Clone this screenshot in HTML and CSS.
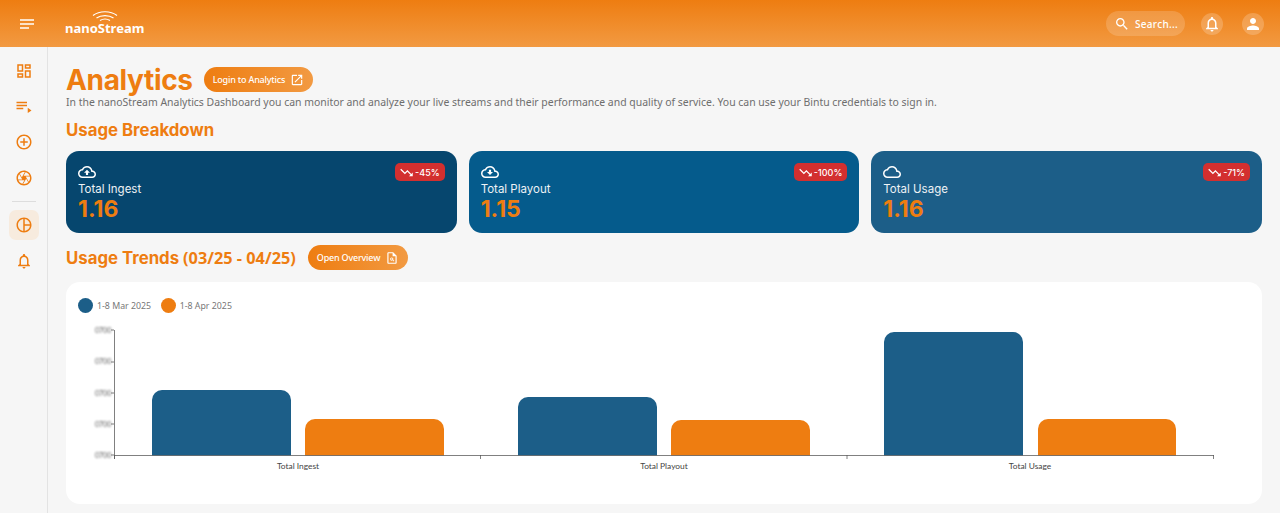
FILE: index.html
```html
<!DOCTYPE html>
<html>
<head>
  <title>nanoStream Analytics</title>
  <meta name="viewport" content="width=device-width, initial-scale=1">
  <link rel="stylesheet" href="styles.css">
</head>
<body>
  <header class="topbar">
    <div class="topbar-left">
      <svg class="menu-icon" viewBox="0 0 14 10"><path d="M0 1h14M0 5h14M0 9h9"/></svg>
      <div class="logo">
        <svg class="logo-waves" viewBox="0 0 26 12"><path d="M1 5.5C7.500.5 18.500.5 25 5.500M4.500 8C9 4.800 17 4.800 21.500 8M8 10.500C11 8.700 15 8.700 18 10.500"/></svg>
        <span class="logo-text">nanoStream</span>
      </div>
    </div>
    <div class="topbar-right">
      <div class="search">
        <svg class="icon-16" viewBox="0 0 24 24"><path d="M15.5 14h-.79l-.28-.27C15.41 12.59 16 11.11 16 9.5 16 5.91 13.09 3 9.5 3S3 5.91 3 9.5 5.91 16 9.5 16c1.610 0 3.090-.59 4.230-1.570l.27.28v.79l5 4.990L20.490 19l-4.990-5zm-6 0C7.010 14 5 11.990 5 9.500S7.010 5 9.500 5 14 7.010 14 9.500 11.990 14 9.500 14z"/></svg>
        <span>Search...</span>
      </div>
      <div class="round-btn">
        <svg class="icon-18" viewBox="0 0 24 24"><path d="M12 22c1.100 0 2-.9 2-2h-4c0 1.100.9 2 2 2zm6-6v-5c0-3.070-1.630-5.640-4.500-6.320V4c0-.83-.67-1.500-1.500-1.500s-1.500.67-1.500 1.500v.68C7.640 5.360 6 7.920 6 11v5l-2 2v1h16v-1l-2-2zm-2 1H8v-6c0-2.480 1.510-4.500 4-4.500s4 2.020 4 4.500v6z"/></svg>
      </div>
      <div class="round-btn user-btn">
        <svg class="icon-18" viewBox="0 0 24 24"><path d="M12 12c2.210 0 4-1.790 4-4s-1.790-4-4-4-4 1.790-4 4 1.790 4 4 4zm0 2c-2.670 0-8 1.340-8 4v2h16v-2c0-2.660-5.330-4-8-4z"/></svg>
      </div>
    </div>
  </header>

  <div class="page">
    <nav class="sidebar">
      <div class="nav-item">
        <svg viewBox="0 0 24 24"><path d="M19 5v2h-4V5h4M9 5v6H5V5h4m10 8v6h-4v-6h4M9 17v2H5v-2h4M21 3h-8v6h8V3zM11 3H3v10h8V3zm10 8h-8v10h8V11zm-10 4H3v6h8v-6z"/></svg>
      </div>
      <div class="nav-item">
        <svg viewBox="0 0 24 24"><path d="M2 5h14v2H2zm0 4h14v2H2zm0 4h9v2H2zM17 13v7l5-3.500z"/></svg>
      </div>
      <div class="nav-item">
        <svg viewBox="0 0 24 24"><path d="M13 7h-2v4H7v2h4v4h2v-4h4v-2h-4V7zm-1-5C6.480 2 2 6.480 2 12s4.480 10 10 10 10-4.480 10-10S17.520 2 12 2zm0 18c-4.410 0-8-3.590-8-8s3.590-8 8-8 8 3.590 8 8-3.590 8-8 8z"/></svg>
      </div>
      <div class="nav-item">
        <svg viewBox="0 0 24 24"><path d="M14.250 2.260l-.08-.04-.01.02C13.460 2.090 12.740 2 12 2 6.480 2 2 6.480 2 12s4.480 10 10 10 10-4.480 10-10c0-4.750-3.310-8.720-7.750-9.740zM19.410 9h-7.990l2.710-4.700c2.400.66 4.350 2.420 5.280 4.700zM13.100 4.080L10.270 9l-1.150 2L6.400 6.300C7.840 4.880 9.820 4 12 4c.37 0 .74.03 1.100.08zM5.700 7.090L8.540 12l1.150 2H4.260C4.100 13.360 4 12.690 4 12c0-1.850.64-3.550 1.700-4.910zM4.590 15h7.980l-2.710 4.700c-2.400-.67-4.340-2.420-5.270-4.700zm6.310 4.910L14.890 13l2.720 4.700C16.160 19.120 14.180 20 12 20c-.38 0-.74-.04-1.100-.09zm7.400-3l-4-6.910h5.430c.17.64.27 1.310.27 2 0 1.850-.64 3.550-1.700 4.910z"/></svg>
      </div>
      <div class="nav-divider"></div>
      <div class="nav-item active">
        <svg viewBox="0 0 24 24"><path d="M12 2C6.490 2 2 6.490 2 12s4.490 10 10 10 10-4.490 10-10S17.510 2 12 2zm7.930 9H13V4.070c3.610.45 6.480 3.320 6.930 6.930zM4 12c0-4.070 3.060-7.440 7-7.930v15.860c-3.940-.49-7-3.860-7-7.930zm9 7.930V13h6.930c-.45 3.610-3.320 6.480-6.930 6.930z"/></svg>
      </div>
      <div class="nav-item">
        <svg viewBox="0 0 24 24"><path d="M12 22c1.100 0 2-.9 2-2h-4c0 1.100.9 2 2 2zm6-6v-5c0-3.070-1.630-5.640-4.500-6.320V4c0-.83-.67-1.500-1.500-1.500s-1.500.67-1.500 1.500v.68C7.640 5.360 6 7.920 6 11v5l-2 2v1h16v-1l-2-2zm-2 1H8v-6c0-2.480 1.510-4.500 4-4.500s4 2.020 4 4.500v6z"/></svg>
      </div>
    </nav>

    <main class="content">
      <div class="title-row">
        <h1>Analytics</h1>
        <a class="pill-btn">Login to Analytics
          <svg class="icon-14" viewBox="0 0 24 24"><path d="M19 19H5V5h7V3H5c-1.110 0-2 .9-2 2v14c0 1.100.89 2 2 2h14c1.100 0 2-.9 2-2v-7h-2v7zM14 3v2h3.590l-9.830 9.830 1.410 1.410L19 6.410V10h2V3h-7z"/></svg>
        </a>
      </div>
      <p class="intro">In the nanoStream Analytics Dashboard you can monitor and analyze your live streams and their performance and quality of service. You can use your Bintu credentials to sign in.</p>

      <h2 class="breakdown-title">Usage Breakdown</h2>
      <section class="stat-cards">
        <div class="stat-card ingest">
          <span class="badge">
            <svg viewBox="0 0 24 24"><path d="M16 18l2.290-2.290-4.880-4.880-4 4L2 7.410 3.410 6l6 6 4-4 6.300 6.290L22 12v6z"/></svg>-45%
          </span>
          <svg class="cloud" viewBox="0 0 24 24"><path d="M19.350 10.040C18.670 6.590 15.640 4 12 4 9.110 4 6.600 5.640 5.350 8.040 2.340 8.360 0 10.910 0 14c0 3.310 2.690 6 6 6h13c2.760 0 5-2.240 5-5 0-2.640-2.050-4.780-4.650-4.960zM19 18H6c-2.210 0-4-1.790-4-4 0-2.050 1.530-3.760 3.560-3.970l1.070-.11.5-.95C8.080 7.140 9.940 6 12 6c2.620 0 4.880 1.860 5.390 4.430l.3 1.500 1.530.11c1.560.1 2.780 1.410 2.780 2.960 0 1.650-1.350 3-3 3zM8 13h2.550v3h2.900v-3H16l-4-4z"/></svg>
          <div class="stat-label">Total Ingest</div>
          <div class="stat-value">1.16</div>
        </div>
        <div class="stat-card playout">
          <span class="badge">
            <svg viewBox="0 0 24 24"><path d="M16 18l2.290-2.290-4.880-4.880-4 4L2 7.410 3.410 6l6 6 4-4 6.300 6.290L22 12v6z"/></svg>-100%
          </span>
          <svg class="cloud" viewBox="0 0 24 24"><path d="M19.350 10.040C18.670 6.590 15.640 4 12 4 9.110 4 6.600 5.640 5.350 8.040 2.340 8.360 0 10.910 0 14c0 3.310 2.690 6 6 6h13c2.760 0 5-2.240 5-5 0-2.640-2.050-4.780-4.650-4.960zM19 18H6c-2.210 0-4-1.790-4-4 0-2.050 1.530-3.760 3.560-3.970l1.070-.11.5-.95C8.080 7.140 9.940 6 12 6c2.620 0 4.880 1.860 5.390 4.430l.3 1.500 1.530.11c1.560.1 2.780 1.410 2.780 2.960 0 1.650-1.350 3-3 3zM13.450 9h-2.900v3H8l4 4 4-4h-2.550z"/></svg>
          <div class="stat-label">Total Playout</div>
          <div class="stat-value">1.15</div>
        </div>
        <div class="stat-card usage">
          <span class="badge">
            <svg viewBox="0 0 24 24"><path d="M16 18l2.290-2.290-4.880-4.880-4 4L2 7.410 3.410 6l6 6 4-4 6.300 6.290L22 12v6z"/></svg>-71%
          </span>
          <svg class="cloud" viewBox="0 0 24 24"><path d="M19.350 10.040C18.670 6.590 15.640 4 12 4 9.110 4 6.600 5.640 5.350 8.040 2.340 8.360 0 10.910 0 14c0 3.310 2.690 6 6 6h13c2.760 0 5-2.240 5-5 0-2.640-2.050-4.780-4.650-4.960zM19 18H6c-2.210 0-4-1.790-4-4 0-2.050 1.530-3.760 3.560-3.970l1.070-.11.5-.95C8.080 7.140 9.940 6 12 6c2.620 0 4.880 1.860 5.390 4.430l.3 1.500 1.530.11c1.560.1 2.780 1.410 2.780 2.960 0 1.650-1.350 3-3 3z"/></svg>
          <div class="stat-label">Total Usage</div>
          <div class="stat-value">1.16</div>
        </div>
      </section>

      <div class="trends-row">
        <h2>Usage Trends <span class="dates">(03/25 - 04/25)</span></h2>
        <a class="pill-btn">Open Overview
          <svg class="icon-14" viewBox="0 0 24 24"><path d="M14 2H6c-1.100 0-2 .9-2 2v16c0 1.100.9 2 2 2h12c1.100 0 2-.9 2-2V8l-6-6zM6 20V4h7v5h5v11H6z"/><path d="M11.500 11a2.700 2.700 0 1 0 1.500 5l1.900 1.900 1-1-1.900-1.900a2.700 2.700 0 0 0-2.500-4zm0 1.400a1.300 1.300 0 1 1 0 2.600 1.300 1.300 0 0 1 0-2.600z"/></svg>
        </a>
      </div>

      <section class="chart-card">
        <div class="legend">
          <span class="legend-item"><i class="dot blue"></i>1-8 Mar 2025</span>
          <span class="legend-item"><i class="dot orange"></i>1-8 Apr 2025</span>
        </div>
        <svg class="chart" viewBox="0 0 1196 160">
          <g class="tick-labels">
            <text x="29" y="11">0700</text>
            <text x="29" y="42">0700</text>
            <text x="29" y="74">0700</text>
            <text x="29" y="105">0700</text>
            <text x="29" y="136">0700</text>
          </g>
          <path class="bar-blue" d="M86 133.500V78a10 10 0 0 1 10-10h119a10 10 0 0 1 10 10v55.500z"/>
          <path class="bar-orange" d="M239 133.500V107a10 10 0 0 1 10-10h119a10 10 0 0 1 10 10v26.500z"/>
          <path class="bar-blue" d="M452 133.500V85a10 10 0 0 1 10-10h119a10 10 0 0 1 10 10v48.500z"/>
          <path class="bar-orange" d="M605 133.500V108a10 10 0 0 1 10-10h119a10 10 0 0 1 10 10v25.500z"/>
          <path class="bar-blue" d="M818 133.500V20a10 10 0 0 1 10-10h119a10 10 0 0 1 10 10v113.500z"/>
          <path class="bar-orange" d="M972 133.500V107a10 10 0 0 1 10-10h118a10 10 0 0 1 10 10v26.500z"/>
          <path class="axis" d="M45 8h3M45 40h3M45 71h3M45 102h3M45 133h3M48.500 8v129M48 133.500h1100M48.500 133v4M414.500 133v4M781 133v4M1147.500 133v4"/>
          <g class="x-labels">
            <text x="232" y="147">Total Ingest</text>
            <text x="598" y="147">Total Playout</text>
            <text x="964" y="147">Total Usage</text>
          </g>
        </svg>
      </section>
    </main>
  </div>
</body>
</html>
```

FILE: styles.css
```css
*, *::before, *::after {
  box-sizing: border-box;
  margin: 0;
  padding: 0;
}

html, body {
  height: 100%;
}

body {
  font-family: "Noto Sans", sans-serif;
  background-color: #f6f6f6;
  color: #666;
  overflow: hidden;
}

/* top bar */
.topbar {
  height: 47px;
  display: flex;
  align-items: center;
  justify-content: space-between;
  padding: 0 16px 0 20px;
  background: linear-gradient(180deg, #ee7d11 0%, #f29a42 100%);
  color: #fff;
}

.topbar-left {
  display: flex;
  align-items: center;
  gap: 31px;
}

.menu-icon {
  width: 14px;
  height: 10px;
  fill: none;
  stroke: #fff;
  stroke-width: 1.5;
}

.logo {
  display: flex;
  flex-direction: column;
  align-items: center;
  margin-top: -1px;
}

.logo-waves {
  width: 26px;
  height: 12px;
  margin-bottom: -1px;
  fill: none;
  stroke: #fff;
  stroke-width: 1.2;
}

.logo-text {
  font-size: 13px;
  line-height: 15px;
  font-weight: 700;
}

.topbar-right {
  display: flex;
  align-items: center;
  gap: 16px;
}

.search {
  width: 79px;
  height: 25px;
  display: flex;
  align-items: center;
  gap: 5px;
  padding-left: 8px;
  border-radius: 13px;
  background: rgba(255, 255, 255, 0.17);
  font-size: 10px;
  font-weight: 500;
  letter-spacing: 0.3px;
}

.round-btn {
  width: 22px;
  height: 22px;
  display: flex;
  align-items: center;
  justify-content: center;
  border-radius: 50%;
  background: rgba(255, 255, 255, 0.2);
}

.user-btn {
  margin-left: 3px;
}

.icon-14 {
  width: 14px;
  height: 14px;
  fill: currentColor;
}

.icon-16 {
  width: 16px;
  height: 16px;
  fill: currentColor;
}

.icon-18 {
  width: 18px;
  height: 18px;
  fill: #fff;
}

/* page layout */
.page {
  display: flex;
  height: 466px;
}

.sidebar {
  width: 48px;
  flex-shrink: 0;
  display: flex;
  flex-direction: column;
  align-items: center;
  padding-top: 9px;
  border-right: 1px solid #e3e3e3;
}

.nav-item {
  width: 30px;
  height: 30px;
  margin-bottom: 5.500px;
  display: flex;
  align-items: center;
  justify-content: center;
  border-radius: 7px;
}

.nav-item svg {
  width: 18px;
  height: 18px;
  fill: #ee7d11;
}

.nav-item.active {
  background: #f7ebde;
}

.nav-divider {
  width: 24px;
  height: 1px;
  margin: 3px 0 8px;
  background: #ddd;
}

.content {
  flex: 1;
  padding: 19px 18px 0;
}

.title-row, .trends-row {
  display: flex;
  align-items: center;
}

.title-row {
  gap: 11px;
  height: 27px;
}

h1 {
  font-family: Inter, sans-serif;
  font-size: 28px;
  font-weight: 700;
  letter-spacing: -0.35px;
  color: #ee7d11;
}

h2 {
  font-family: Inter, sans-serif;
  font-size: 16.800px;
  font-weight: 700;
  color: #ee7d11;
}

.dates {
  font-family: "Noto Sans", sans-serif;
  font-size: 16.300px;
}

.pill-btn {
  height: 25px;
  display: flex;
  align-items: center;
  gap: 5px;
  padding: 0 8.500px 0 9px;
  border-radius: 13px;
  background: linear-gradient(90deg, #ee7d11, #f29a42);
  color: #fff;
  font-size: 9px;
  font-weight: 500;
  letter-spacing: -0.2px;
}

.intro {
  margin-top: 1px;
  font-size: 10.450px;
  line-height: 17px;
  color: #6e6e6e;
}

.breakdown-title {
  margin-top: 9px;
  line-height: 21px;
}

/* stat cards */
.stat-cards {
  display: grid;
  grid-template-columns: repeat(3, 1fr);
  gap: 12px;
  margin-top: 10px;
}

.stat-card {
  position: relative;
  height: 82px;
  padding: 12px 12px 0;
  border-radius: 13px;
  color: #fff;
}

.stat-card.ingest {
  background: #06466e;
}

.stat-card.playout {
  background: #055b8c;
}

.stat-card.usage {
  background: #1c5e88;
}

.cloud {
  display: block;
  width: 18px;
  height: 18px;
  fill: #fff;
}

.stat-label {
  font-family: Inter, sans-serif;
  font-size: 11.500px;
  line-height: 14px;
  margin-top: 1px;
  color: #eef2f5;
}

.stat-value {
  font-family: Inter, sans-serif;
  font-size: 23px;
  line-height: 26px;
  font-weight: 700;
  color: #ee7d11;
}

.badge {
  position: absolute;
  top: 12px;
  right: 12px;
  height: 18px;
  display: flex;
  align-items: center;
  gap: 1px;
  padding: 0 5px 0 4px;
  border-radius: 5px;
  background: #d32f2f;
  font-family: Inter, sans-serif;
  font-size: 9px;
  font-weight: 500;
}

.badge svg {
  width: 15px;
  height: 15px;
  fill: #fff;
}

/* trends */
.trends-row {
  gap: 12px;
  margin-top: 12px;
  height: 25px;
}

.chart-card {
  margin-top: 12px;
  height: 222px;
  padding-top: 16px;
  border-radius: 14px;
  background: #fff;
}

.legend {
  display: flex;
  gap: 9.500px;
  padding-left: 12px;
  height: 15px;
}

.legend-item {
  display: flex;
  align-items: center;
  gap: 4px;
  font-size: 8.800px;
  color: #777;
}

.dot {
  width: 15px;
  height: 15px;
  border-radius: 50%;
}

.dot.blue {
  background: #1c5e88;
}

.dot.orange {
  background: #ee7d11;
}

.chart {
  display: block;
  width: 1196px;
  height: 160px;
  margin-top: 9px;
}

.axis {
  fill: none;
  stroke: #555;
  stroke-opacity: 0.75;
  stroke-width: 1;
}

.bar-blue {
  fill: #1c5e88;
}

.bar-orange {
  fill: #ee7d11;
}

.tick-labels text {
  font-family: Lato, sans-serif;
  font-size: 7px;
  fill: #555;
  filter: blur(1px);
}

.x-labels text {
  font-family: Lato, sans-serif;
  font-size: 8.400px;
  fill: #444;
  text-anchor: middle;
}
```
